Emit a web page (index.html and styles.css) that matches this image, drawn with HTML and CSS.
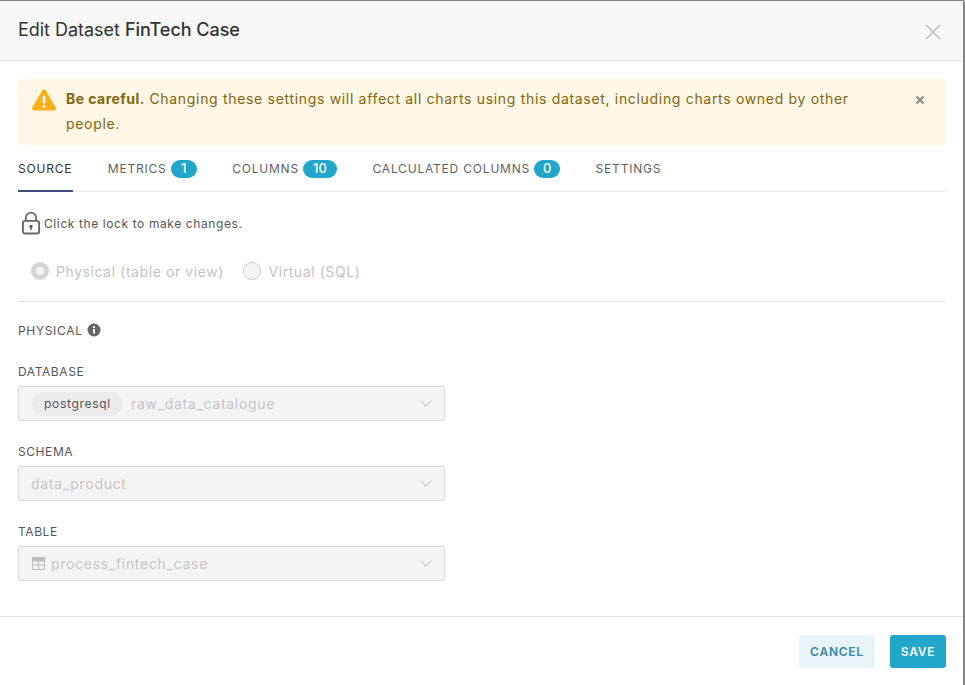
FILE: index.html
```html
<!DOCTYPE html>
<html lang="en">
<head>
<meta charset="utf-8">
<title>Edit Dataset</title>
<link rel="stylesheet" href="styles.css">
</head>
<body>
<div class="modal">
  <header class="modal-header">
    <h1 class="title">Edit Dataset <span class="title-name">FinTech Case</span></h1>
    <svg class="close" width="16" height="16" viewBox="0 0 16 16"><path d="M1 1L15 15M15 1L1 15" fill="none" stroke="#b3b6c9" stroke-width="1.3"/></svg>
  </header>
  <main class="modal-body">
    <div class="alert">
      <svg class="alert-icon" width="26" height="24" viewBox="0 0 26 24"><path d="M13 1.5c-.9 0-1.6.5-2 1.2L1.4 19.2c-.9 1.6.2 3.4 2 3.4h19.2c1.8 0 2.9-1.8 2-3.4L15 2.7c-.4-.7-1.100-1.200-2-1.200z" fill="#fbb01a"/><rect x="11.700" y="7.500" width="2.600" height="8" rx="1.200" fill="#fff"/><circle cx="13" cy="18.500" r="1.500" fill="#fff"/></svg>
      <p class="alert-text"><strong>Be careful.</strong> Changing these settings will affect all charts using this dataset, including charts owned by other people.</p>
      <svg class="alert-close" width="10" height="10" viewBox="0 0 10 10"><path d="M1.500 1.500L8.500 8.500M8.500 1.500L1.500 8.500" fill="none" stroke="#8a8a80" stroke-width="2"/></svg>
    </div>
    <nav class="tabs">
      <span class="tab tab-active">SOURCE</span>
      <span class="tab">METRICS <b class="badge badge-s">1</b></span>
      <span class="tab">COLUMNS <b class="badge">10</b></span>
      <span class="tab">CALCULATED COLUMNS <b class="badge badge-s">0</b></span>
      <span class="tab">SETTINGS</span>
    </nav>
    <div class="lock-row">
      <svg width="20" height="24" viewBox="0 0 20 24"><path d="M4.800 10V6.800a5.200 5.200 0 0 1 10.400 0V10" fill="none" stroke="#666" stroke-width="1.700"/><rect x="1.900" y="9.900" width="16.200" height="12.600" rx="2" fill="none" stroke="#666" stroke-width="1.900"/><circle cx="10" cy="15.300" r="1.600" fill="#555"/><rect x="9.300" y="15.500" width="1.400" height="3.400" fill="#555"/></svg>
      <span>Click the lock to make changes.</span>
    </div>
    <div class="radios">
      <label class="radio"><i class="dot dot-on"></i>Physical (table or view)</label>
      <label class="radio"><i class="dot"></i>Virtual (SQL)</label>
    </div>
    <hr class="rule">
    <div class="section-label">PHYSICAL <svg width="14" height="14" viewBox="0 0 14 14"><circle cx="7" cy="7" r="6.500" fill="#666"/><rect x="6" y="6" width="2" height="4.500" fill="#fff"/><rect x="6" y="3.200" width="2" height="1.800" fill="#fff"/></svg></div>
    <div class="field field-first">
      <div class="field-label">DATABASE</div>
      <div class="select"><span class="pill">postgresql</span><span class="value">raw_data_catalogue</span><svg class="chev" width="12" height="7" viewBox="0 0 12 7"><path d="M.5.500L6 6.200 11.500.500" fill="none" stroke="#bdbdbd"/></svg></div>
    </div>
    <div class="field">
      <div class="field-label">SCHEMA</div>
      <div class="select"><span class="value value-plain">data_product</span><svg class="chev" width="12" height="7" viewBox="0 0 12 7"><path d="M.5.500L6 6.200 11.500.500" fill="none" stroke="#bdbdbd"/></svg></div>
    </div>
    <div class="field">
      <div class="field-label">TABLE</div>
      <div class="select"><svg class="table-icon" width="13" height="13" viewBox="0 0 13 13"><path d="M0 0h13v13H0z" fill="#bdbdbd"/><path d="M1 4.500h5v3H1zM7 4.500h5v3H7zM1 8.500h5v3.500H1zM7 8.500h5v3.500H7z" fill="#f3f3f3"/></svg><span class="value">process_fintech_case</span><svg class="chev" width="12" height="7" viewBox="0 0 12 7"><path d="M.5.500L6 6.200 11.500.500" fill="none" stroke="#bdbdbd"/></svg></div>
    </div>
  </main>
  <footer class="modal-footer">
    <button class="btn btn-cancel">CANCEL</button>
    <button class="btn btn-save">SAVE</button>
  </footer>
</div>
</body>
</html>
```
FILE: styles.css
```css
* { box-sizing: border-box; }
html, body { height: 100%; }
body { margin: 0; font-family: Inter, "Liberation Sans", sans-serif; color: #323232; background: #fff; }
.modal { width: 965px; height: 685px; display: flex; flex-direction: column; border-top: 1px solid #858585; border-right: 2px solid #858585; border-top-right-radius: 2px; overflow: hidden; }
.modal-header { height: 60px; flex: none; display: flex; align-items: center; justify-content: space-between; padding: 0 22px 0 18px; background: #f7f7f7; border-bottom: 1px solid #e4e4e4; }
.title { margin: 0; font-size: 18px; font-weight: 400; line-height: 24px; position: relative; top: -1px; letter-spacing: -.03px; }
.title-name { font-weight: 500; }
.close { margin-top: 3px; }
.modal-body { flex: 1; padding: 18px 17px 0 18px; }
.alert { height: 66px; display: flex; align-items: flex-start; padding: 7px 21px 0 13px; background: #fef7e6; border-radius: 3px; color: #80660f; }
.alert-icon { flex: none; margin: 2px 9px 0 0; }
.alert-text { margin: 0; flex: 1; font-size: 14px; line-height: 25px; letter-spacing: .68px; padding-right: 50px; }
.alert-text strong { letter-spacing: .45px; }
.alert-close { flex: none; margin-top: 9px; }
.tabs { display: flex; height: 47px; border-bottom: 1px solid #ececec; align-items: flex-start; padding-top: 15px; gap: 35.5px; }
.tab { font-size: 12px; letter-spacing: .8px; line-height: 18px; color: #5f5f5f; display: flex; align-items: center; gap: 4px; }
.tab-active { color: #323232; position: relative; }
.tab-active::after { content: ""; position: absolute; left: 0; right: -1px; top: 30px; height: 2px; background: #444e7c; }
.badge { display: inline-block; height: 18px; min-width: 34px; padding: 0 8px; border-radius: 9px; background: #20a7c9; color: #fff; font-weight: 500; font-size: 13px; line-height: 17px; text-align: center; letter-spacing: 0; }
.badge-s { min-width: 26px; }
.lock-row { display: flex; align-items: center; height: 24px; margin-top: 19px; font-size: 12px; letter-spacing: .6px; color: #555; padding-left: 3px; gap: 3px; }
.radios { display: flex; gap: 19.5px; margin-top: 25px; padding-left: 13px; height: 22px; align-items: center; }
.radio { display: flex; align-items: center; font-size: 14px; letter-spacing: .58px; color: #c4c4c4; gap: 7px; }
.dot { width: 18px; height: 18px; border-radius: 50%; border: 1px solid #ccc; background: #f4f4f4; }
.dot-on { border: 5px solid #d4d4d4; background: #f5f5f5; }
.rule { margin: 19px 0 0; border: 0; border-top: 1px solid #e0e0e0; }
.section-label { display: flex; align-items: center; gap: 4px; height: 18px; margin-top: 19px; font-size: 12px; letter-spacing: .67px; color: #555; }
.field { margin-top: 23px; }
.field-first { margin-top: 25px; }
.field-label { font-size: 12px; line-height: 16px; letter-spacing: .58px; color: #555; }
.select { height: 35px; margin-top: 6px; width: 427px; display: flex; align-items: center; padding: 0 12px 0 13px; background: #f4f4f4; border: 1px solid #d9d9d9; border-radius: 3px; }
.pill { height: 24px; line-height: 23px; padding: 0 11px 0 12px; margin-right: 9px; border-radius: 12px; background: #ebebeb; font-size: 12px; letter-spacing: .7px; color: #555; }
.value { font-size: 14px; letter-spacing: .7px; color: #c4c4c4; flex: 1; }
.value-plain { margin-left: -1px; }
.table-icon { margin-right: 6px; }
.chev { flex: none; }
.modal-footer { height: 69px; flex: none; display: flex; justify-content: flex-end; align-items: flex-start; gap: 15px; padding: 18px 17px 0 0; border-top: 1px solid #e0e0e0; }
.btn { height: 33px; border: 0; border-radius: 3px; font-family: Inter, "Liberation Sans", sans-serif; font-size: 12px; font-weight: 600; letter-spacing: .75px; }
.btn-cancel { width: 76px; background: #e8f4f8; color: #3a88a2; }
.btn-save { width: 56px; background: #20a7c9; color: #fff; }
```
